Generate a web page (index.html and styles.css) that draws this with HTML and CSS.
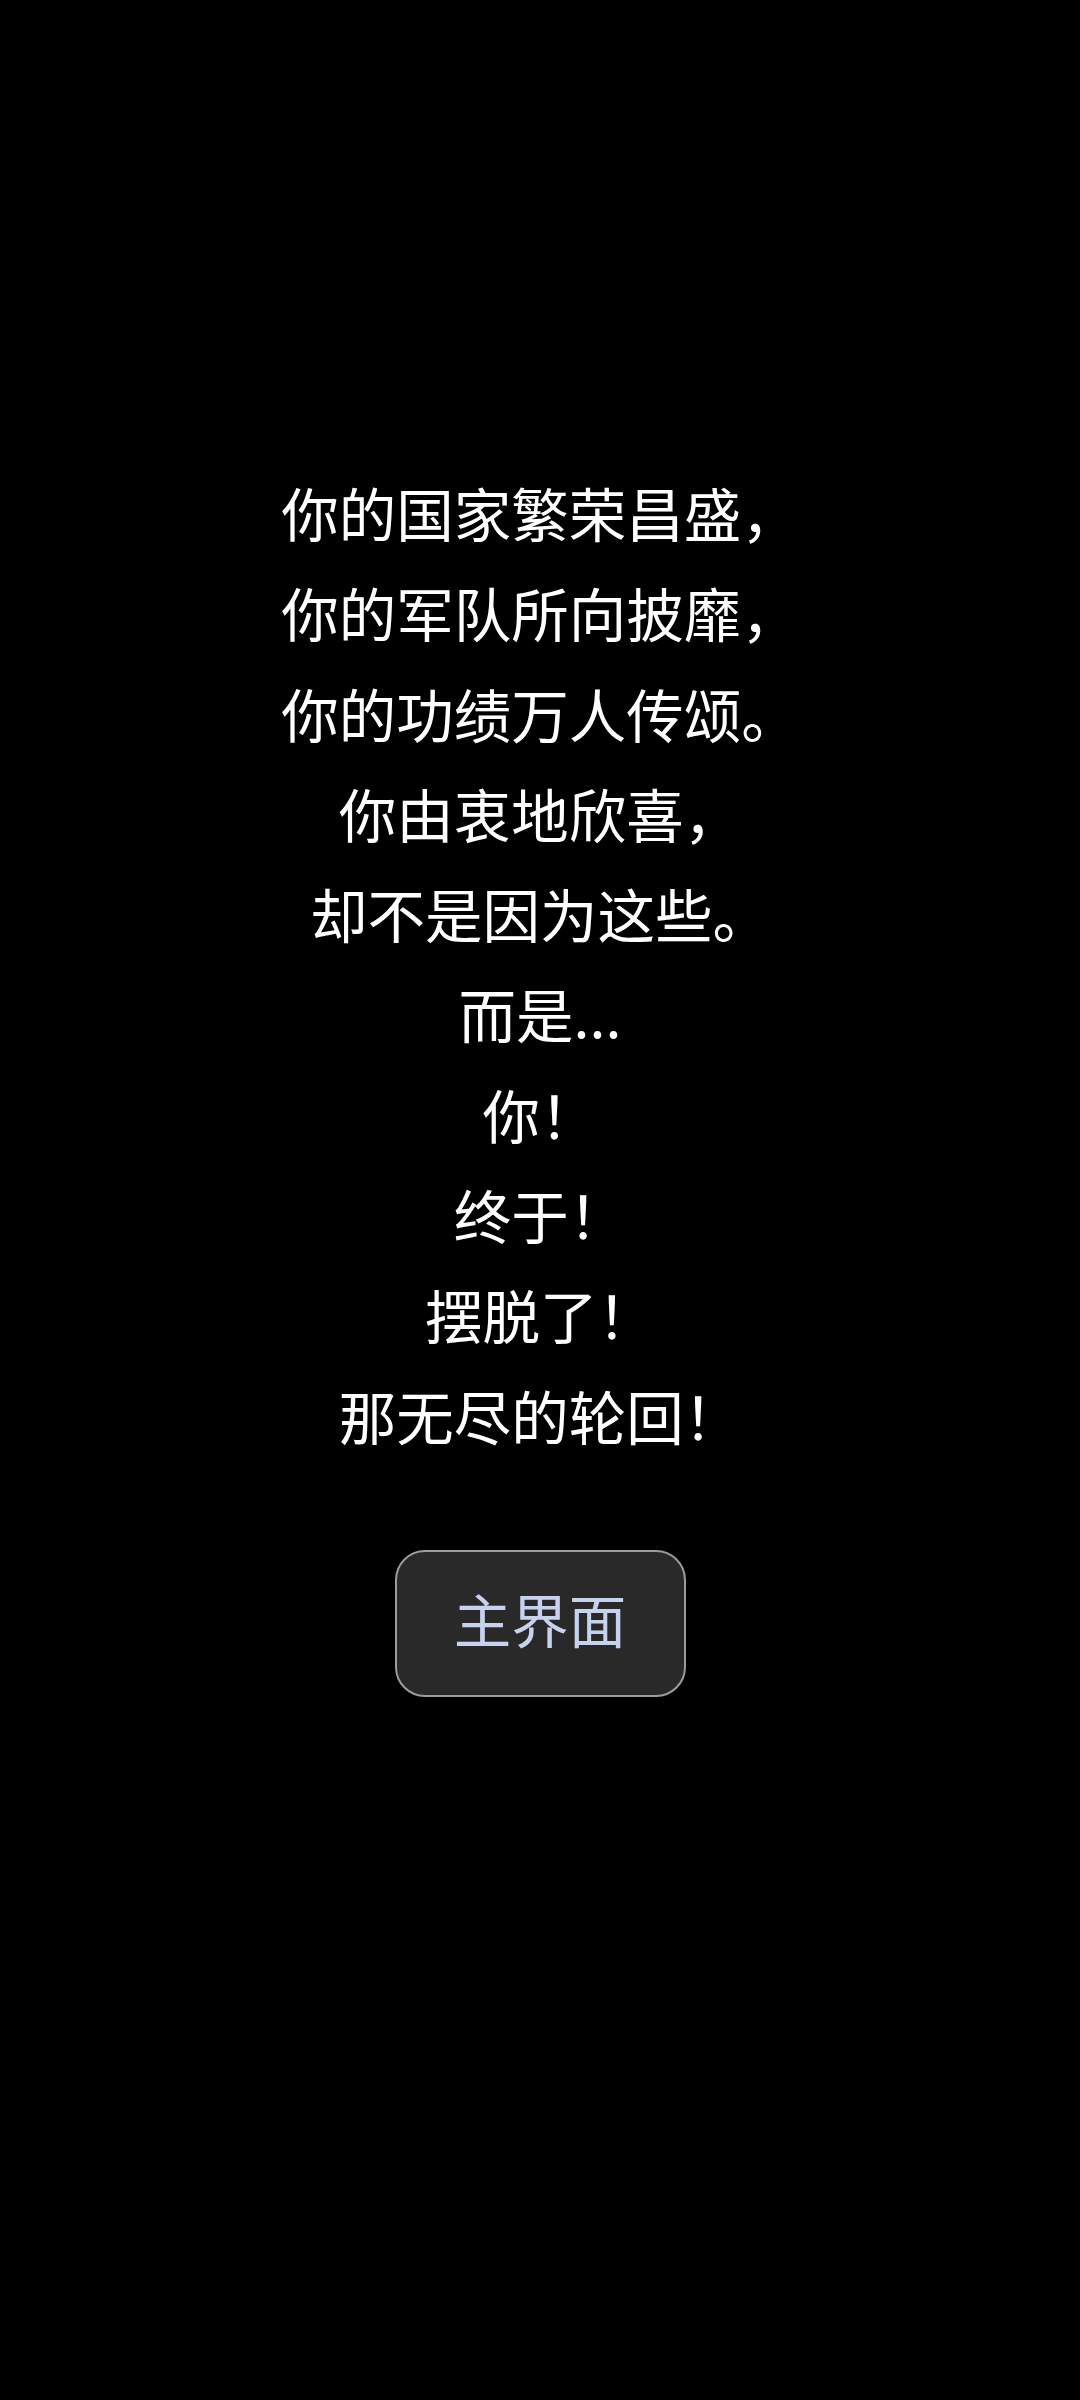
FILE: index.html
```html
<!DOCTYPE html>
<html lang="zh-CN">
<head>
<meta charset="utf-8">
<title>结局</title>
<link rel="stylesheet" href="styles.css">
</head>
<body>
<main class="screen">
  <section class="story">
    <div class="line">你的国家繁荣昌盛，</div>
    <div class="line">你的军队所向披靡，</div>
    <div class="line">你的功绩万人传颂。</div>
    <div class="line">你由衷地欣喜，</div>
    <div class="line">却不是因为这些。</div>
    <div class="line">而是...</div>
    <div class="line">你！</div>
    <div class="line">终于！</div>
    <div class="line">摆脱了！</div>
    <div class="line">那无尽的轮回！</div>
  </section>
  <button class="home-btn" type="button">主界面</button>
</main>
</body>
</html>
```

FILE: styles.css
```css
html, body {
  margin: 0;
  padding: 0;
  background: #000;
}

body {
  width: 1080px;
  height: 2400px;
  overflow: hidden;
  font-family: "Noto Sans CJK SC", "Noto Sans", sans-serif;
}

.screen {
  display: flex;
  flex-direction: column;
  align-items: center;
  padding-top: 462px;
}

.story {
  display: flex;
  flex-direction: column;
  align-items: center;
  color: #ffffff;
  font-size: 57.5px;
  line-height: 100.3px;
  text-align: center;
}

.line {
  white-space: nowrap;
}

.home-btn {
  margin-top: 85px;
  box-sizing: border-box;
  width: 291px;
  height: 147px;
  padding: 0;
  display: flex;
  align-items: center;
  justify-content: center;
  background: #292929;
  border: 2.5px solid #9c9c9c;
  border-radius: 30px;
  color: #c6d2ee;
  font-family: "Noto Sans CJK SC", "Noto Sans", sans-serif;
  font-size: 57.5px;
  line-height: 1;
  padding-bottom: 10px;
}
```
